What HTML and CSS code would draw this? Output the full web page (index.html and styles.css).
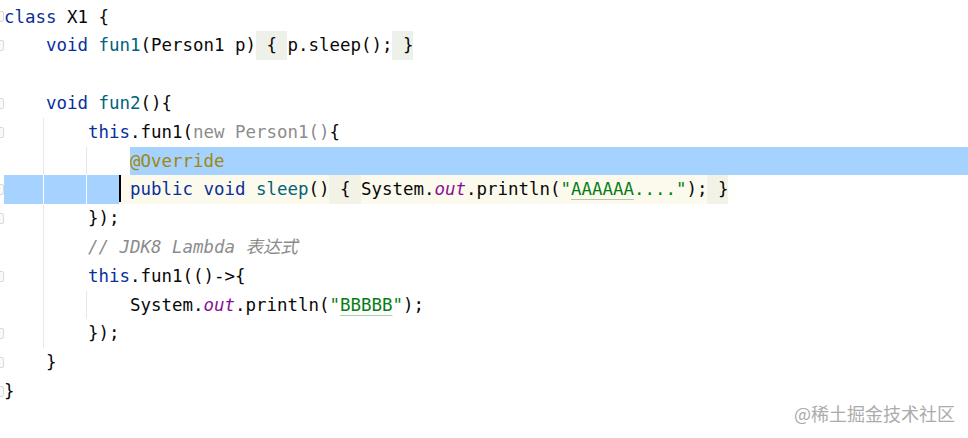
FILE: index.html
```html
<!DOCTYPE html>
<html lang="zh">
<head>
<meta charset="utf-8">
<title>Editor</title>
<link rel="stylesheet" href="styles.css">
</head>
<body>
<div class="editor">
  <div class="line"><span class="fold"><i class="mk"></i></span><span class="code"><span class="kw">class</span> X1 {</span></div>
  <div class="line"><span class="fold"><i class="mk"></i></span><span class="code">    <span class="kw">void</span> <span class="fn">fun1</span>(Person1 p)<span class="fb"> { </span>p.sleep();<span class="fb"> }</span></span></div>
  <div class="line"><span class="fold"></span><span class="code"> </span></div>
  <div class="line"><span class="fold"><i class="mk"></i></span><span class="code">    <span class="kw">void</span> <span class="fn">fun2</span>(){</span></div>
  <div class="line g1"><span class="fold"><i class="mk"></i></span><span class="code">        <span class="kw">this</span>.fun1(<span class="gray">new Person1()</span>{</span></div>
  <div class="line g1 g2 row"><span class="fold"></span><span class="lead">            </span><span class="selfill"><span class="ann">@Override</span></span></div>
  <div class="line row"><span class="fold"><i class="mk"></i></span><span class="sel">           </span><span class="caret"></span><span class="curline"> <span class="kw">public void</span> <span class="fn">sleep</span>()<span class="fb2"> { </span>System.<span class="st">out</span>.println(<span class="str">"<span class="typo">AAAAAA</span>...."</span>);<span class="fb2"> }</span></span></div>
  <div class="line g1"><span class="fold"><i class="mk"></i></span><span class="code">        });</span></div>
  <div class="line g1"><span class="fold"></span><span class="code">        <span class="cm">// JDK8 Lambda 表达式</span></span></div>
  <div class="line g1"><span class="fold"><i class="mk"></i></span><span class="code">        <span class="kw">this</span>.fun1(()-&gt;{</span></div>
  <div class="line g1 g2"><span class="fold"></span><span class="code">            System.<span class="st">out</span>.println(<span class="str">"<span class="typo">BBBBB</span>"</span>);</span></div>
  <div class="line g1"><span class="fold"><i class="mk"></i></span><span class="code">        });</span></div>
  <div class="line"><span class="fold"><i class="mk"></i></span><span class="code">    }</span></div>
  <div class="line"><span class="fold"><i class="mk"></i></span><span class="code">}</span></div>
</div>
<div class="watermark">@稀土掘金技术社区</div>
</body>
</html>
```

FILE: styles.css
```css
html, body {
  margin: 0;
  padding: 0;
  background: #ffffff;
}
body {
  width: 968px;
  height: 438px;
  overflow: hidden;
  position: relative;
}
.editor {
  padding-top: 2.6px;
  font-family: "DejaVu Sans Mono", "Noto Sans CJK SC", monospace;
  font-size: 17.44px;
  color: #080808;
}
.line {
  display: flex;
  height: 28.8px;
  line-height: 28.8px;
  white-space: pre;
}
.g1 {
  background-image: linear-gradient(90deg, transparent 43px, #e8e8e8 43px, #e8e8e8 44px, transparent 44px);
}
.g1.g2 {
  background-image:
    linear-gradient(90deg, transparent 43px, #e8e8e8 43px, #e8e8e8 44px, transparent 44px),
    linear-gradient(90deg, transparent 86px, #e8e8e8 86px, #e8e8e8 87px, transparent 87px);
}
.fold {
  flex: none;
  width: 4px;
  display: flex;
  align-items: center;
}
.mk {
  display: block;
  width: 7px;
  height: 9px;
  margin-left: -4px;
  border: 1px solid #dadada;
  border-radius: 2px;
  background: #fafafa;
}
.code {
  flex: none;
}
.lead {
  flex: none;
}
.selfill {
  flex: 1;
  background: #a6d2ff;
}
.sel {
  flex: none;
  background-color: #a6d2ff;
  background-image:
    linear-gradient(90deg, transparent 39px, #ffffff 39px, #ffffff 40px, transparent 40px),
    linear-gradient(90deg, transparent 82px, #ffffff 82px, #ffffff 83px, transparent 83px);
}
.caret {
  flex: none;
  width: 0;
  border-left: 2px solid #000000;
  margin-right: -2px;
  margin-top: -0.5px;
  height: 27px;
  position: relative;
  z-index: 1;
}
.curline {
  flex: 1;
  background: linear-gradient(90deg, #fcfaed 0, #fcfaed 575px, #ffffff 620px);
}
.fb {
  display: inline-block;
  background: #edf1ea;
}
.fb2 {
  display: inline-block;
  background: #f3f2e6;
}
.kw { color: #0a2f9c; }
.fn { color: #00627a; }
.st { color: #871094; font-style: italic; }
.str { color: #067d17; }
.ann { color: #9e880d; }
.gray { color: #8c8c8c; }
.cm { color: #8c8c8c; font-style: italic; }
.typo {
  text-decoration: underline;
  text-decoration-color: #a9cfa9;
  text-decoration-thickness: 1px;
  text-underline-offset: 4px;
}
.watermark {
  position: absolute;
  right: 13px;
  bottom: 14px;
  font-family: "Noto Sans CJK SC", sans-serif;
  font-size: 18px;
  line-height: 22px;
  color: #ababab;
}
```
